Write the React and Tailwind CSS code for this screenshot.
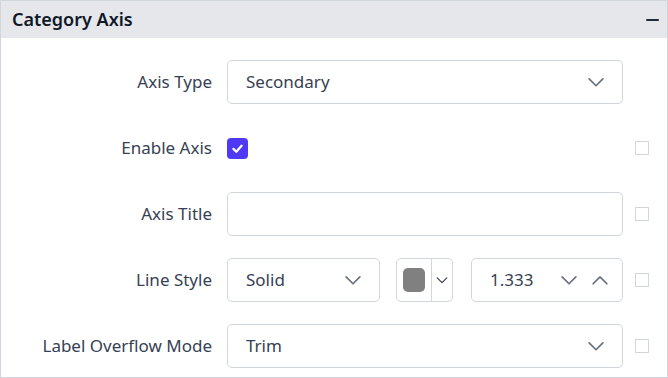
import React from 'react';

const Chevron = ({ up = false, className = '' }) => (
    <svg viewBox="0 0 16 16" className={className} fill="none" stroke="currentColor" strokeWidth="1.4" strokeLinecap="round" strokeLinejoin="round">
        {up ? <path d="M2.5 11 8 5.5 13.5 11" /> : <path d="M2.5 5.5 8 11 13.5 5.5" />}
    </svg>
);

const SideBox = ({ hidden = false }) => (
    <div className={`w-[14px] h-[14px] border border-gray-300 bg-white shrink-0 ${hidden ? 'invisible' : ''}`} />
);

const Row = ({ label, children, side = true }) => (
    <div className="flex items-center h-[44px]">
        <div className="w-[211px] shrink-0 text-right text-[17px] text-gray-700 whitespace-nowrap">{label}</div>
        <div className="w-[396px] ml-[15px] shrink-0 flex items-center h-full">{children}</div>
        <div className="ml-[12px]"><SideBox hidden={!side} /></div>
    </div>
);

const Select = ({ value, className = '' }) => (
    <div className={`h-full flex items-center justify-between border border-gray-300 rounded-[5px] bg-white pl-[18px] pr-[16px] text-[17px] text-gray-700 ${className}`}>
        <span>{value}</span>
        <Chevron className="w-[20px] h-[20px] text-gray-500" />
    </div>
);

const App = () => {
    return (
        <div className="w-[668px] h-[378px] border border-gray-300 bg-white overflow-hidden" style={{ fontFamily: '"Noto Sans", "Open Sans", sans-serif' }}>
            <div className="h-[37px] bg-gray-200 flex items-center justify-between pl-[11px] pr-[8px]">
                <span className="text-[18px] font-semibold text-gray-900">Category Axis</span>
                <div className="w-[13px] h-[2px] bg-gray-800 rounded-sm" />
            </div>
            <div className="pt-[22px] flex flex-col gap-[22px]">
                <Row label="Axis Type" side={false}>
                    <Select value="Secondary" className="w-full" />
                </Row>
                <Row label="Enable Axis">
                    <div className="w-[21px] h-[21px] rounded-[4px] bg-indigo-600 flex items-center justify-center">
                        <svg viewBox="0 0 16 16" className="w-[13px] h-[13px]" fill="none" stroke="white" strokeWidth="2.8" strokeLinecap="round" strokeLinejoin="round">
                            <path d="M3 8.5 6.5 12 13 4.5" />
                        </svg>
                    </div>
                </Row>
                <Row label="Axis Title">
                    <div className="h-full w-full border border-gray-300 rounded-[5px] bg-white" />
                </Row>
                <Row label="Line Style">
                    <Select value="Solid" className="w-[153px]" />
                    <div className="h-full w-[57px] ml-[16px] border border-gray-300 rounded-[5px] bg-white flex items-stretch">
                        <div className="w-[35px] flex items-center justify-center border-r border-gray-300">
                            <div className="w-[22px] h-[24px] rounded-[5px] bg-[#808080]" />
                        </div>
                        <div className="flex-1 flex items-center justify-center">
                            <Chevron className="w-[14px] h-[14px] text-gray-700" />
                        </div>
                    </div>
                    <div className="h-full w-[152px] ml-[18px] border border-gray-300 rounded-[5px] bg-white flex items-center pl-[18px] pr-[12px] text-[17px] text-gray-700">
                        <span className="flex-1">1.333</span>
                        <Chevron className="w-[20px] h-[20px] text-gray-500" />
                        <Chevron up className="w-[20px] h-[20px] text-gray-500 ml-[11px]" />
                    </div>
                </Row>
                <Row label="Label Overflow Mode">
                    <Select value="Trim" className="w-full" />
                </Row>
            </div>
        </div>
    );
};

export default App;
